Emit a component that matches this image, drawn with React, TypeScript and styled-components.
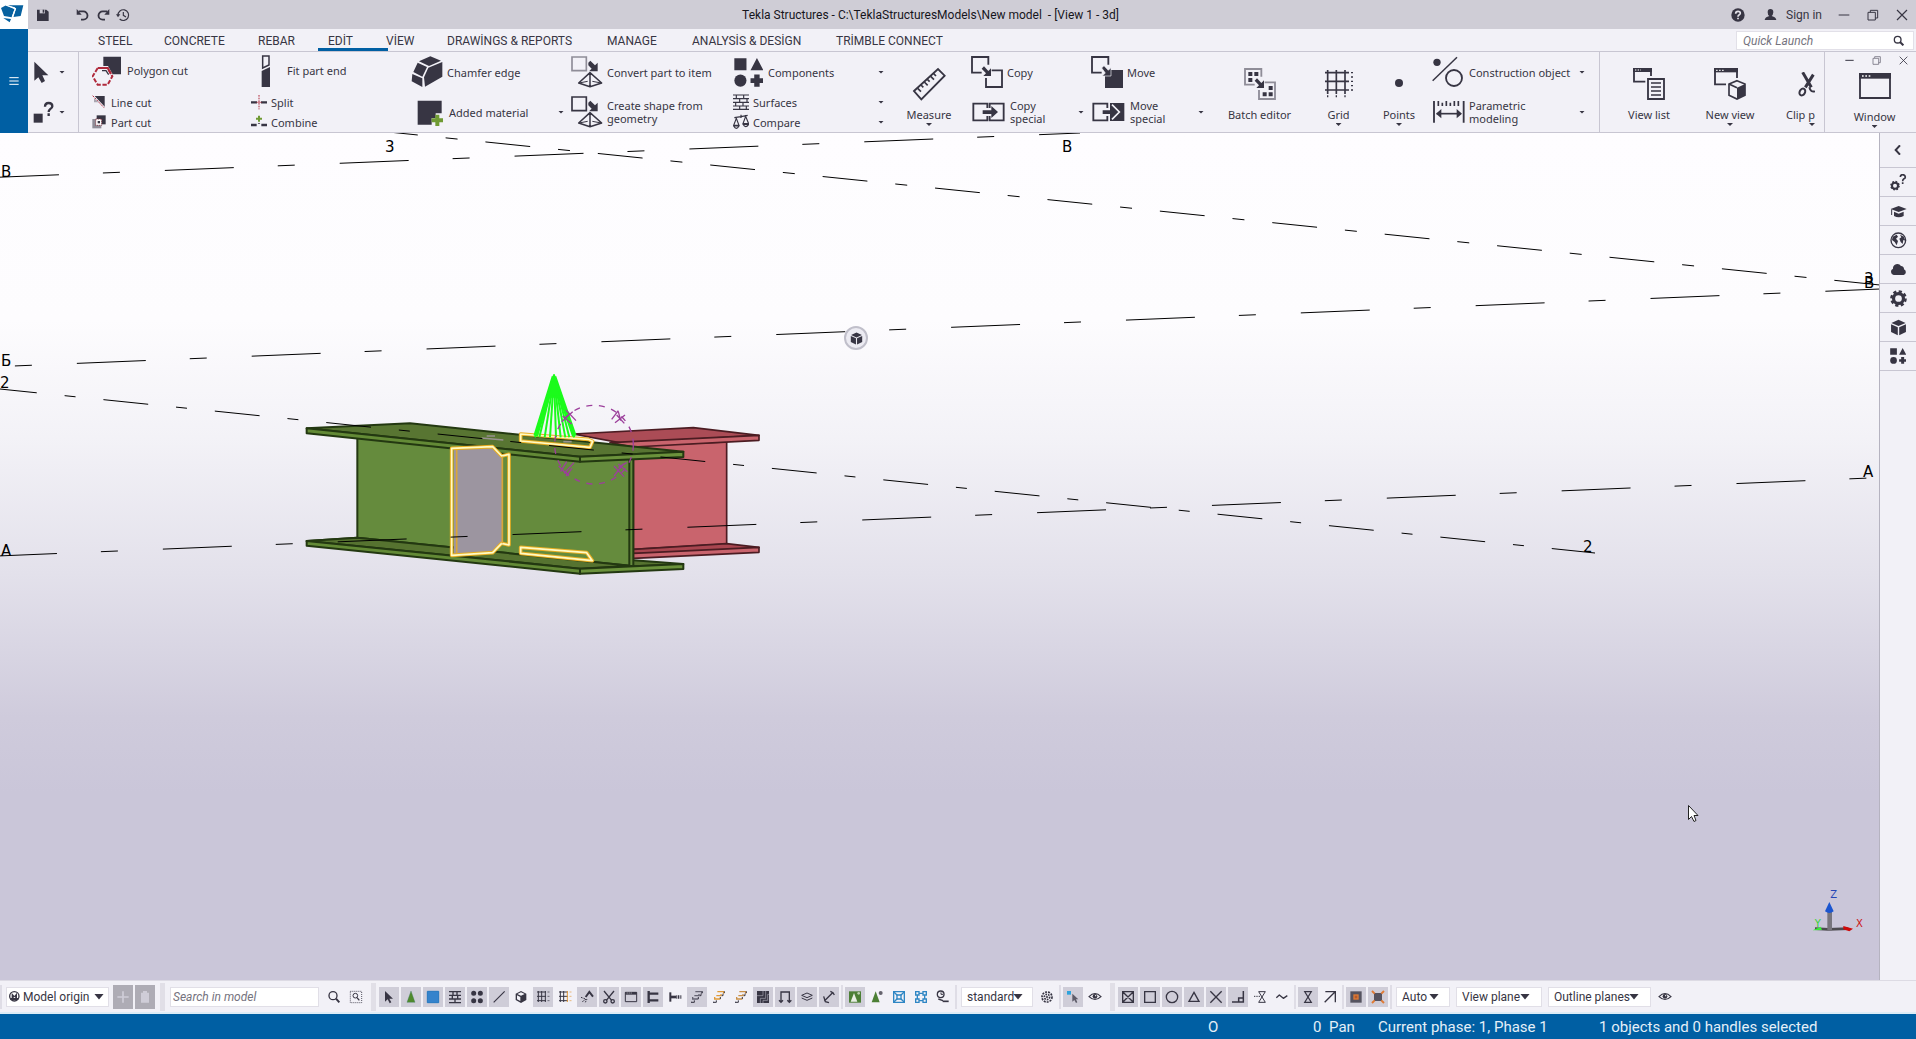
import React, { ReactNode } from "react";
import styled, { createGlobalStyle } from "styled-components";

const ink = "#373543";
const panel = "#f2f1f7";
const line = "#c8c6d2";
const brand = "#005fa3";
const uiFont = `Roboto, "Noto Sans", sans-serif`;
const ribbonFont = `"Noto Sans", "Open Sans", sans-serif`;

const GlobalStyle = createGlobalStyle`
  * { box-sizing: border-box; }
  body { margin: 0; background: ${panel}; color: ${ink}; font: 12px/16px ${uiFont}; }
  button, input, select { font: inherit; color: inherit; }
  button { border: 0; padding: 0; background: none; cursor: default; }
  svg { display: block; flex: none; }
`;

/* ---------- page frame ---------- */

const Page = styled.div`
  display: flex;
  flex-direction: column;
  height: 100vh;
  overflow: hidden;
`;

const Header = styled.header`
  display: grid;
  grid-template-columns: 28px minmax(0, 1fr);
  grid-template-rows: 29px 23px 81px;
`;

const LogoBox = styled.div`
  background: #fff;
`;

const MainMenu = styled.button`
  grid-row: 2 / 4;
  grid-column: 1;
  display: flex;
  align-items: center;
  justify-content: center;
  background: ${brand};
`;

const TitleBar = styled.div`
  display: flex;
  align-items: center;
  padding: 0 8px;
  background: #cfcdd6;
`;

const QuickTools = styled.div`
  display: flex;
  gap: 6px;
`;

const ToolButton = styled.button<{ $after?: number }>`
  display: flex;
  align-items: center;
  justify-content: center;
  width: 14px;
  height: 18px;
  margin-right: ${(p) => p.$after ?? 0}px;
`;

const Title = styled.h1`
  flex: 1;
  margin: 0;
  text-align: center;
  white-space: pre;
  font: 12px/16px ${uiFont};
  color: #16151c;
`;

const Account = styled.div`
  display: flex;
  align-items: center;
  gap: 16px;
`;

const SignIn = styled.button`
  display: flex;
  align-items: center;
  gap: 9px;
`;

const WindowKeys = styled.div<{ $gap: number }>`
  display: flex;
  gap: ${(p) => p.$gap}px;
`;

/* ---------- tabs ---------- */

const TabRow = styled.div`
  display: flex;
  align-items: stretch;
  border-bottom: 1px solid ${line};
  padding-left: 54px;
`;

const Tabs = styled.nav`
  display: flex;
  flex: 1;
`;

const Tab = styled.a<{ $w: number; $active?: boolean }>`
  position: relative;
  width: ${(p) => p.$w}px;
  padding-left: 16px;
  line-height: 25px;
  height: 22px;
  white-space: nowrap;
  color: ${ink};
  text-decoration: none;

  &::after {
    content: "";
    display: ${(p) => (p.$active ? "block" : "none")};
    position: absolute;
    left: 6px;
    bottom: 0;
    width: 70px;
    height: 3px;
    background: ${brand};
  }
`;

const QuickLaunch = styled.label`
  display: flex;
  align-items: center;
  width: 178px;
  margin: 2px 2px 1px 0;
  padding: 0 9px 0 6px;
  background: #fff;
  border: 1px solid #e2e0e8;
`;

const GhostInput = styled.input`
  flex: 1;
  min-width: 0;
  padding: 0;
  border: 0;
  outline: 0;
  background: none;
  font-style: italic;
  &::placeholder { color: #75737e; opacity: 1; }
`;

/* ---------- ribbon ---------- */

const Ribbon = styled.div`
  display: flex;
  border-bottom: 1px solid ${line};
  font: 11px/13px ${ribbonFont};
`;

const PickColumn = styled.div`
  display: grid;
  grid-template-rows: 40px 40px;
  width: 51px;
  padding-left: 5px;
  border-right: 1px solid ${line};
`;

const Column = styled.div<{ $w: number; $pad?: number }>`
  display: flex;
  flex-direction: column;
  width: ${(p) => p.$w}px;
  padding-left: ${(p) => p.$pad ?? 0}px;
`;

const Command = styled.button<{ $h: number; $gap?: number; $inset?: number }>`
  display: flex;
  align-items: center;
  gap: ${(p) => p.$gap ?? 4}px;
  height: ${(p) => p.$h}px;
  padding: 0 7px 0 ${(p) => p.$inset ?? 0}px;
  text-align: left;
`;

const Caret = styled.i<{ $push?: boolean }>`
  width: 6px;
  height: 3px;
  margin-left: ${(p) => (p.$push ? "auto" : "0")};
  background: ${ink};
  clip-path: polygon(0 0, 100% 0, 50% 100%);
`;

const SmallRows = styled.div`
  display: flex;
  flex-direction: column;
  margin-top: 3px;
`;

const BigCommand = styled.button<{ $w: number; $end?: boolean }>`
  display: flex;
  flex: none;
  flex-direction: column;
  align-items: ${(p) => (p.$end ? "flex-end" : "center")};
  width: ${(p) => p.$w}px;
  padding-top: 13px;
  white-space: nowrap;
`;

const BigIcon = styled.span`
  display: flex;
  align-items: center;
  height: 38px;
  margin-bottom: 5px;
`;

const BigLabel = styled.span`
  line-height: 14px;
  margin-bottom: 1px;
`;

const ViewGroup = styled.div`
  display: flex;
  flex: 1;
  min-width: 0;
  margin-left: 7px;
  border-left: 1px solid ${line};
`;

const WindowGroup = styled.div`
  display: flex;
  flex-direction: column;
  align-items: flex-end;
  width: 92px;
  border-left: 1px solid ${line};
  padding: 4px 8px 0 0;
`;

const WindowCommand = styled(BigCommand)`
  align-self: center;
  padding: 2px 0 0 16px;
`;

/* ---------- workspace ---------- */

const Workspace = styled.main`
  display: flex;
  flex: 1;
  min-height: 0;
`;

const Viewport = styled.section`
  position: relative;
  flex: 1;
  min-width: 0;
  overflow: hidden;
  background: linear-gradient(#fefdff 0%, #fdfcfe 22%, #f3f2f7 36%, #e3e1eb 52%, #cfcbdc 69%, #cac6d9 78%);
  border-right: 1px solid #b5b3c0;
`;

const Scene = styled.svg`
  width: 100%;
  height: 100%;
`;

const CubeButton = styled.button`
  position: absolute;
  left: 844px;
  top: 193px;
  display: flex;
  align-items: center;
  justify-content: center;
  width: 24px;
  height: 24px;
  border: 2px solid #c0bfca;
  border-radius: 50%;
  background: #ecebf2;
`;

const SideBar = styled.aside`
  display: flex;
  flex-direction: column;
  width: 36px;
`;

const SideButton = styled.button<{ $h?: number }>`
  display: flex;
  align-items: center;
  justify-content: center;
  height: ${(p) => p.$h ?? 29}px;
  border-bottom: 1px solid ${line};
`;

/* ---------- bottom bars ---------- */

const SelectBar = styled.div`
  display: flex;
  align-items: center;
  gap: 2px;
  height: 34px;
  border-top: 1px solid #dddbe4;
  border-bottom: 2px solid #dcecf6;
`;

const Handle = styled.span`
  width: 5px;
  align-self: stretch;
  margin: 2px 1px 1px 3px;
  background: #e1dfe7;
`;

const Divider = styled.span`
  width: 2px;
  height: 24px;
  background: #dfdde6;
`;

const Toggle = styled.button<{ $on?: boolean }>`
  width: 20px;
  height: 20px;
  background: ${(p) => (p.$on ? "#cfcdd8" : "transparent")};
`;

const OriginKey = styled.button`
  display: flex;
  align-items: center;
  justify-content: center;
  width: 20px;
  height: 24px;
  background: #aeacb5;
`;

const Drop = styled.label<{ $w: number }>`
  display: grid;
  grid-template-columns: minmax(0, 1fr);
  align-items: center;
  width: ${(p) => p.$w}px;
  height: 20px;
  margin: 0 2px;
  background: #fff;
  border: 1px solid #e1dfe7;

  & > * { grid-area: 1 / 1; }
`;

const DropSelect = styled.select<{ $pad: number }>`
  appearance: none;
  width: 100%;
  height: 18px;
  padding: 0 0 0 ${(p) => p.$pad}px;
  border: 0;
  outline: 0;
  background: none;
`;

const DropCaret = styled.i<{ $right: number }>`
  justify-self: end;
  width: 10px;
  height: 6px;
  margin-right: ${(p) => p.$right}px;
  background: ${ink};
  clip-path: polygon(0 0, 100% 0, 50% 100%);
  pointer-events: none;
`;

const SearchBox = styled(GhostInput)`
  flex: none;
  width: 149px;
  height: 20px;
  margin: 0 3px 0 2px;
  padding-left: 2px;
  border: 1px solid #e1dfe7;
  background: #fff;
`;

const StatusBar = styled.footer`
  display: grid;
  grid-template-columns: minmax(0, 1fr) 105px 16px 49px 221px 317px;
  height: 25px;
  background: ${brand};
  color: #e4eff8;
  font-size: 15px;
  line-height: 26px;
  white-space: nowrap;
`;

const Status = styled.span<{ $col: number }>`
  grid-column: ${(p) => p.$col};
`;

/* ---------- icons: drawn on a grid of three units per pixel ---------- */

const Icon = ({ w, h = w, children }: { w: number; h?: number; children: ReactNode }) => (
  <svg width={w} height={h} viewBox={`0 0 ${w * 3} ${h * 3}`} fill="none" stroke="none" aria-hidden="true">
    {children}
  </svg>
);

const Logo = () => (
  <Icon w={28} h={29}>
    <path d="M3 24 L18 16 L44 27 L35 52 L12 48Z M22 16 L70 16 L62 48 L40 51 L48 26 L44 22Z M10 54 L33 57 L29 67Z" fill="#07619f" />
    <path d="M17 15 L46 26 L37 52" stroke="#fff" strokeWidth="4" />
  </Icon>
);

const Pyramid = () => (
  <>
    <path d="M57 50 L23 81 L57 92 L92 81Z M57 50 L57 92" stroke={ink} strokeWidth="4.5" strokeLinejoin="round" />
    <path d="M24 81 L50 76 M64 76 L91 81" stroke={ink} strokeWidth="3" />
    <path d="M52 20 L58 14 L72 28 L80 20 L80 46 L54 46 L62 38 L52 28Z" fill={ink} />
  </>
);

const Glasses = () => (
  <g stroke={ink} strokeWidth="4">
    <circle cx="14" cy="14" r="10" />
    <path d="M21 21 L31 31" strokeWidth="6" />
  </g>
);

const Cube = ({ size }: { size: number }) => (
  <svg width={size} height={size} viewBox="0 0 48 48" aria-hidden="true">
    <path d="M24 2 L44 11 L24 20 L4 11Z M3 15 L22 23 L22 46 L3 37Z M45 15 L26 23 L26 46 L45 37Z" fill={ink} />
  </svg>
);

const Shapes = ({ size }: { size: number }) => (
  <svg width={size} height={size} viewBox="0 0 86 86" aria-hidden="true">
    <path d="M1 1H37V36H1Z M68 0 L87 36H49Z M60 49H76V60H87V74H76V85H60V74H49V60H60Z" fill={ink} />
    <circle cx="19" cy="67" r="18" fill={ink} />
  </svg>
);

const Gear = ({ size }: { size: number }) => (
  <svg width={size} height={size} viewBox="0 0 48 48" aria-hidden="true">
    <circle cx="24" cy="24" r="14" fill="none" stroke={ink} strokeWidth="9" />
    <circle cx="24" cy="24" r="20" fill="none" stroke={ink} strokeWidth="7" strokeDasharray="9 6.7" />
  </svg>
);

const MinKey = () => <Icon w={12}><path d="M2 18H34" stroke={ink} strokeWidth="3" /></Icon>;
const RestoreKey = () => (
  <Icon w={12}><path d="M3 10H25V33H3Z M10 10V4H32V27H25" stroke={ink} strokeWidth="3" /></Icon>
);
const CloseKey = () => <Icon w={12}><path d="M3 3L33 33M33 3L3 33" stroke={ink} strokeWidth="3.5" /></Icon>;
const SmallMin = () => <Icon w={9}><path d="M1 13H26" stroke={ink} strokeWidth="3" /></Icon>;
const SmallRestore = () => (
  <Icon w={9}><path d="M3 7H20V25H3Z M8 6V2H25V20H20" stroke="#777582" strokeWidth="2.5" /></Icon>
);
const SmallClose = () => <Icon w={9}><path d="M2 2L25 25M25 2L2 25" stroke={ink} strokeWidth="2.5" /></Icon>;

const GridLines = ({ accent = ink }: { accent?: string }) => (
  <>
    <path d="M12 15H39M12 28H39M12 41H39M16 12V45M26 12V45" stroke={ink} strokeWidth="3" />
    <path d="M37 12V45" stroke={accent} strokeWidth="3" />
    <path d="M44 15H50M44 28H50M44 41H50" stroke={accent} strokeWidth="3" strokeDasharray="3 2" />
  </>
);

const Stairs = ({ color }: { color: string }) => (
  <>
    <path d="M25 14H44V20M22 26H36V21M17 30V36H34" stroke={color} strokeWidth="4" />
    <path d="M46 13V18M38 26H42V20M34 36V30M14 44V48M14 46H22V40" stroke={ink} strokeWidth="3" />
  </>
);

const Eye = () => (
  <>
    <path d="M12 29 Q30 10 48 29 Q30 46 12 29Z" stroke={ink} strokeWidth="3.5" />
    <circle cx="30" cy="28" r="7" fill={ink} />
    <circle cx="32" cy="26" r="2" fill="#fff" />
  </>
);

const Scissors = () => (
  <g stroke={ink} strokeWidth="4">
    <path d="M15 12L38 40M45 12L22 40" />
    <circle cx="19" cy="43" r="5" />
    <circle cx="41" cy="43" r="5" />
  </g>
);

type Key = { name: string; on?: boolean; art: ReactNode };

const selectKeys: Key[] = [
  { name: "Select all", on: true, art: <path d="M18 12V44L26 37L32 49L37 46L31 35H42Z" fill={ink} /> },
  { name: "Select components", on: true, art: <path d="M30 12L42 46H18Z" fill="#4f8a2c" stroke="#3d7a6a" strokeWidth="1" /> },
  { name: "Select parts", on: true, art: <path d="M13 13H47V47H13Z" fill="#3583cc" stroke="#2478c0" strokeWidth="3" /> },
  { name: "Select surfaces", on: true, art: <path d="M12 14H48M12 25H48M12 36H48M12 47H48M24 14V25M38 25V36M22 25V36M30 36V47M36 14V25" stroke={ink} strokeWidth="4" /> },
  { name: "Select points", on: true, art: <path d="M20 19h.1M40 19h.1M20 41h.1M40 41h.1" stroke={ink} strokeWidth="15" strokeLinecap="round" /> },
  { name: "Select lines", on: true, art: <path d="M14 46L47 13" stroke={ink} strokeWidth="3.5" /> },
  { name: "Select reference models", art: <g><path d="M30 12L46 20V39L30 48L14 39V20Z" fill={ink} /><path d="M30 16L41 21L30 26L19 21Z M18 25L28 30V42L18 37Z" fill="#f2f1f7" /></g> },
  { name: "Select grids", on: true, art: <GridLines /> },
  { name: "Select grid lines", art: <GridLines accent="#e39a3c" /> },
  { name: "Select welds", on: true, art: <g stroke={ink}><path d="M26 30L37 15L48 29" strokeWidth="6" /><path d="M12 31L28 37M16 44L28 36M25 46L30 36" strokeWidth="3" strokeDasharray="5 3" /></g> },
  { name: "Select cuts", on: true, art: <Scissors /> },
  { name: "Select views", on: true, art: <g><path d="M13 16H47V44H13Z" stroke={ink} strokeWidth="3" /><path d="M13 15H47V23H13Z" fill={ink} /><path d="M17 18H34" stroke="#fff" strokeWidth="2" strokeDasharray="3 3" /></g> },
  { name: "Select fittings", on: true, art: <path d="M17 12V48M17 20H46M17 40H46" stroke={ink} strokeWidth="7" /> },
  { name: "Select bolts", art: <g stroke={ink}><path d="M16 16V44" strokeWidth="6" /><path d="M18 30H34" strokeWidth="8" /><path d="M34 30H50" strokeWidth="10" strokeDasharray="3 2" /></g> },
  { name: "Select rebars", on: true, art: <Stairs color="#656371" /> },
  { name: "Select rebar groups", art: <Stairs color="#e09a3a" /> },
  { name: "Select single rebars", art: <Stairs color="#c99048" /> },
  { name: "Select surface treatment", on: true, art: <g><path d="M12 12H48V48H12Z" fill={ink} /><path d="M30 12V26H12M38 12V34H22V48M48 22H44V40H30V48" stroke="#a9a7b3" strokeWidth="2" /></g> },
  { name: "Select loads", on: true, art: <path d="M18 44V15H43V44M12 40L18 46L24 40M37 40L43 46L49 40" stroke={ink} strokeWidth="4" /> },
  { name: "Select planes", on: true, art: <path d="M30 18L46 25L30 32L14 25Z M14 33L30 40L46 33" stroke={ink} strokeWidth="3" /> },
  { name: "Select distances", on: true, art: <path d="M16 42L40 18M14 28L19 44L30 47M34 13L42 17L46 24" stroke={ink} strokeWidth="4" /> },
];

const assemblyKeys: Key[] = [
  { name: "Select assemblies", on: true, art: <g><path d="M12 13H48V47H12Z" fill="#4c7f35" /><path d="M27 18L37 44H17Z" fill="#e9eee4" /><circle cx="41" cy="19" r="4" fill="#bcd0b0" /></g> },
  { name: "Select objects in assemblies", art: <g><path d="M26 13L38 46H14Z" fill="#4c7f35" /><circle cx="41" cy="18" r="6" fill="#65636d" /></g> },
  { name: "Select components group", art: <g stroke="#2f86c4" strokeWidth="4"><path d="M14 14H46V46H14Z" /><path d="M14 14L46 46M46 14L14 46" /><path d="M24 24H36V36H24Z" fill="#f2f1f7" /></g> },
  { name: "Select objects in components", art: <path d="M14 14H24V24H14ZM36 14H46V24H36ZM14 36H24V46H14ZM36 36H46V46H36ZM19 24V36M41 24V36M24 19H36M24 41H36" stroke="#2f86c4" strokeWidth="4" /> },
  { name: "Select tasks", art: <g stroke={ink}><circle cx="23" cy="22" r="10" strokeWidth="4" /><path d="M24 16V22H30" strokeWidth="3" /><path d="M16 36L30 41" strokeWidth="4" /><path d="M29 43H47" strokeWidth="5" /></g> },
];

const snapKeys: Key[] = [
  { name: "Snap to reference points", on: true, art: <path d="M14 14H46V46H14ZM14 14L46 46M46 14L14 46" stroke={ink} strokeWidth="4" /> },
  { name: "Snap to geometry points", on: true, art: <path d="M14 14H46V46H14Z" stroke={ink} strokeWidth="4" /> },
  { name: "Snap to centers", on: true, art: <circle cx="30" cy="30" r="17" stroke={ink} strokeWidth="4" /> },
  { name: "Snap to midpoints", on: true, art: <path d="M30 16L45 43H15Z" stroke={ink} strokeWidth="4" /> },
  { name: "Snap to intersections", on: true, art: <path d="M13 13L47 47M47 13L13 47" stroke={ink} strokeWidth="4" /> },
  { name: "Snap to perpendicular", on: true, art: <path d="M12 45H46V12M32 44V33H44" stroke={ink} strokeWidth="4.5" /> },
  { name: "Snap to extensions", art: <g stroke={ink} strokeWidth="3"><path d="M12 28H32" strokeDasharray="4 3" /><path d="M26 14H46L26 46H46Z" /></g> },
  { name: "Snap to free points", art: <path d="M13 32L22 24L34 34L46 26" stroke={ink} strokeWidth="4" strokeLinejoin="round" /> },
];

const Keys = ({ list }: { list: Key[] }) => (
  <>
    {list.map((k) => (
      <Toggle key={k.name} $on={k.on} aria-label={k.name}>
        <Icon w={20}>{k.art}</Icon>
      </Toggle>
    ))}
  </>
);

const Picker = ({ w, name, value, right, pad = 5 }: { w: number; name: string; value: string; right: number; pad?: number }) => (
  <Drop $w={w}>
    <DropSelect $pad={pad} aria-label={name} defaultValue={value}>
      <option>{value}</option>
    </DropSelect>
    <DropCaret $right={right} />
  </Drop>
);

/* ---------- 3D scene ---------- */

const dash = "69 44 17 45";
const rays = [735, 748, 764, 780, 798, 812, 826, 838, 853];

const Beams = () => (
  <g transform="translate(290 360) scale(.33333)" strokeLinejoin="round">
    <g stroke="#4b1c22" strokeWidth="5">
      <path d="M1030 258L1310 246V552L1030 568Z" fill="#c9646d" />
      <path d="M1030 568L1310 551L1407 562L1120 584L1030 580Z" fill="#a94650" />
      <path d="M1030 580L1407 562V577L1030 595Z" fill="#c9646d" />
      <path d="M850 222L1210 203L1407 226L1000 250Z" fill="#ab4c56" />
      <path d="M960 248L1407 226V241L1030 261Z" fill="#c9646d" />
    </g>
    <g stroke="#233811" strokeWidth="6">
      <path d="M50 543L202 533L1020 600L1180 612L870 626Z" fill="#567330" />
      <path d="M202 232L1020 290V617L202 533Z" fill="#658b3d" />
      <path d="M202 533L1020 617L870 626L50 543Z" fill="#567330" />
      <path d="M50 543L870 626V641L50 557Z" fill="#638a36" />
      <path d="M870 626L1180 612V627L870 641Z" fill="#6b923c" />
      <path d="M1018 290H1030V618H1018Z" fill="#658b3d" />
      <path d="M50 205L360 190L1180 275L870 290Z" fill="#587532" />
      <path d="M50 205L870 290V305L50 220Z" fill="#638a36" />
      <path d="M870 290L1180 275V291L870 305Z" fill="#6b923c" />
    </g>
    <path d="M492 268L610 262L636 290V550L608 578L492 584Z" fill="#9c95a0" />
    {[["#e9ae22", 11], ["#fffbc4", 5]].map(([color, width]) => (
      <g key={color} stroke={color as string} strokeWidth={width as number} fill="none">
        <path d="M485 265L608 260L635 288L657 283V555L635 550L608 578L485 586Z" />
        <path d="M692 222L895 238L908 244L900 262L692 243Z M692 562L890 578L907 602L692 580Z" />
      </g>
    ))}
    <path d="M500 270V580M637 290V550" stroke="#d9a63a" strokeWidth="5" fill="none" />
    <path d="M575 234L640 240M590 228H615M820 245H845" stroke="#97918f" strokeWidth="5" />
    <g stroke="#1bfb1b" strokeWidth="6">
      {rays.map((x) => <path key={x} d={`M792 50L${x} 232`} />)}
      <path d="M792 50L737 228M792 50L853 228" strokeWidth="14" />
      <path d="M792 45L812 110H772Z" fill="#1bfb1b" />
    </g>
    <g stroke="#9c3f9b" strokeWidth="4" fill="none">
      <circle cx="912" cy="254" r="118" strokeDasharray="18 20" />
      <path d="M965 178L985 152M975 188L1005 165M980 165L1003 190M985 155L992 182" />
      <path d="M828 150L858 182M818 168L845 192M815 185L848 155" />
      <path d="M806 318L836 348M822 340L852 308M812 335L830 305M828 348L846 325" />
      <path d="M972 318L1002 350M985 312L1012 335M972 348L1000 312M985 322L1010 308" />
    </g>
  </g>
);

const Axes = () => (
  <g transform="translate(1500 870) scale(.33333)">
    <path d="M945 176L985 178L1045 176" stroke="#4d4b50" strokeWidth="8" fill="none" />
    <path d="M989 125V182" stroke="#77757d" strokeWidth="14" />
    <path d="M988 96L1001 124Q988 134 975 124Z" fill="#1b55cf" />
    <path d="M1030 168L1059 176L1048 184L1030 178Z" fill="#cf0909" />
    <path d="M938 181L962 170L966 180Z" fill="#3be83b" />
    <g fontFamily="'DejaVu Sans'" fontSize="30">
      <text x="991" y="84" fill="#2546b5">Z</text>
      <text x="944" y="172" fill="#3bd23b">Y</text>
      <text x="1068" y="171" fill="#cc1212">X</text>
    </g>
  </g>
);

const ModelScene = () => (
  <Scene viewBox="0 133 1879 847" preserveAspectRatio="xMinYMin slice" role="img" aria-label="3D model view">
    <Beams />
    <g stroke="#000" strokeWidth="1" fill="none">
      <path d="M-10 177.6L1080 133" strokeDasharray={dash} />
      <path d="M-98 370.6L1880 289" strokeDasharray={dash} />
      <path d="M-12 556.4L1870 478" strokeDasharray={dash} />
      <path d="M373 130.4L1880 285" strokeDasharray="45 28 12 28" />
      <path d="M-8 388.2L1595 553" strokeDasharray="45 28 11 28" />
    </g>
    <g fontFamily="'DejaVu Sans', sans-serif" fontSize="15" fill="#000">
      <text x="1" y="177">B</text>
      <text x="385" y="152">3</text>
      <text x="1062" y="152">B</text>
      <text x="1" y="366">Б</text>
      <text x="0" y="388">2</text>
      <text x="1" y="556">A</text>
      <text x="1864" y="284">3</text>
      <text x="1864" y="288">B</text>
      <text x="1863" y="477">A</text>
      <text x="1583" y="552">2</text>
    </g>
    <Axes />
    <path d="M1688.5 805.5V819.5L1691.5 816.5L1694 821.5L1696 820.5L1694 815.5H1698Z" fill="#fff" stroke="#222" />
  </Scene>
);

/* ---------- data ---------- */

const tabs: [string, number][] = [
  ["STEEL", 66], ["CONCRETE", 94], ["REBAR", 70], ["EDİT", 58], ["VİEW", 61],
  ["DRAWİNGS & REPORTS", 160], ["MANAGE", 85], ["ANALYSİS & DESİGN", 144], ["TRİMBLE CONNECT", 140],
];

export default function App() {
  return (
    <Page>
      <GlobalStyle />
      <Header>
        <LogoBox><Logo /></LogoBox>
        <TitleBar>
          <QuickTools>
            <ToolButton aria-label="Save" $after={20}>
              <Icon w={14}><path d="M3 5H31L38 11V39H3Z" fill={ink} /><path d="M11 4H27V16H11Z" fill="#cfcdd6" /><path d="M20 5H25V14H20Z" fill={ink} /></Icon>
            </ToolButton>
            <ToolButton aria-label="Undo">
              <Icon w={14}><path d="M8 10H22A12 12 0 0 1 22 35H15" stroke={ink} strokeWidth="5.5" /><path d="M2 3V20H17L12 14Z" fill={ink} /></Icon>
            </ToolButton>
            <ToolButton aria-label="Redo">
              <Icon w={14}><path d="M34 10H20A12 12 0 0 0 20 35H27" stroke={ink} strokeWidth="5.5" /><path d="M40 3V20H25L30 14Z" fill={ink} /></Icon>
            </ToolButton>
            <ToolButton aria-label="History">
              <Icon w={14}><path d="M6 22A16 16 0 1 1 11 33" stroke={ink} strokeWidth="3.5" /><path d="M22 12V22L30 27" stroke={ink} strokeWidth="3.5" /><path d="M0 19H13L6 28Z" fill={ink} /></Icon>
            </ToolButton>
          </QuickTools>
          <Title>{"Tekla Structures - C:\\TeklaStructuresModels\\New model  - [View 1 - 3d]"}</Title>
          <Account>
            <ToolButton aria-label="Help" $after={3}>
              <Icon w={14}><circle cx="21" cy="21" r="20" fill={ink} /><path d="M14 17Q14 10 21 10T28 16Q28 19 24 21Q21 23 21 26M21 29V34" stroke="#e4e2ea" strokeWidth="5" /></Icon>
            </ToolButton>
            <SignIn>
              <Icon w={13}><path d="M19 3Q28 3 28 13Q27 22 23 24Q36 27 37 36H2Q3 27 16 24Q11 22 11 13Q11 3 19 3Z" fill={ink} /></Icon>
              Sign in
            </SignIn>
            <WindowKeys $gap={17}>
              <button aria-label="Minimize"><MinKey /></button>
              <button aria-label="Restore"><RestoreKey /></button>
              <button aria-label="Close"><CloseKey /></button>
            </WindowKeys>
          </Account>
        </TitleBar>
        <MainMenu aria-label="File menu">
          <Icon w={10}><path d="M1 5H29M1 15H29M1 25H29" stroke="#fff" strokeWidth="3" /></Icon>
        </MainMenu>
        <TabRow>
          <Tabs>
            {tabs.map(([name, w]) => <Tab key={name} href="#" $w={w} $active={name === "EDİT"}>{name}</Tab>)}
          </Tabs>
          <QuickLaunch>
            <GhostInput placeholder="Quick Launch" aria-label="Quick Launch" />
            <Icon w={11}><Glasses /></Icon>
          </QuickLaunch>
        </TabRow>
        <Ribbon>
          <PickColumn>
            <Command $h={40} $gap={9} aria-label="Select">
              <Icon w={17} h={22}><path d="M4 2V59L16 49L26 66L36 60L28 43H46Z" fill={ink} /></Icon>
              <Caret />
            </Command>
            <Command $h={40} $gap={5} aria-label="Inquire">
              <Icon w={21} h={22}><path d="M2 38H29V65H2Z" fill={ink} /><path d="M36 17Q36 6 47 6T58 16Q58 21 51 25Q47 28 47 33M47 37V45" stroke={ink} strokeWidth="7" /></Icon>
              <Caret />
            </Command>
          </PickColumn>

          <Column $w={172} $pad={13}>
            <Command $h={40} $gap={5}>
              <Icon w={30}>
                <path d="M34 2H87V55H62L48 30H34Z" fill={ink} />
                <path d="M17 36H47L61 61L47 86H17L2 61Z" stroke="#b02a3c" strokeWidth="6" strokeDasharray="13 5" fill="none" />
                <path d="M30 36H47L57 54" stroke="#b02a3c" strokeWidth="6" />
                <path d="M30 44H42L50 56" stroke={ink} strokeWidth="4" />
              </Icon>
              Polygon cut
            </Command>
            <SmallRows>
              <Command $h={20} $gap={5}>
                <Icon w={14}><path d="M6 3H38V40Z" fill={ink} /><path d="M2 2L38 40" stroke="#f2f1f7" strokeWidth="7" /><path d="M2 2L36 38" stroke="#b02a3c" strokeWidth="3" strokeDasharray="6 3" /><path d="M6 10V22L20 22Z" fill="#a9a7b1" /></Icon>
                Line cut
              </Command>
              <Command $h={20} $gap={5}>
                <Icon w={14}><path d="M1 12H28V40H1Z" fill="#8f8d98" /><path d="M14 1H41V28H14Z" fill={ink} /><path d="M11 12H29V31H11Z" fill="#fff" stroke="#7b3140" strokeWidth="2.5" strokeDasharray="4 2" /><path d="M17 18H24V25H17Z" fill={ink} /></Icon>
                Part cut
              </Command>
            </SmallRows>
          </Column>

          <Column $w={160}>
            <Command $h={40} $gap={15} $inset={9}>
              <Icon w={12} h={32}><path d="M8 3H27V30L8 39Z" stroke={ink} strokeWidth="4.5" /><path d="M5 48L30 36V96H5Z" fill={ink} /></Icon>
              Fit part end
            </Command>
            <SmallRows>
              <Command $h={20}>
                <Icon w={16}><path d="M0 25H18M30 25H48" stroke={ink} strokeWidth="7" /><path d="M24 3V46" stroke="#b02a3c" strokeWidth="3" strokeDasharray="5 3" /><path d="M16 25H32" stroke="#b02a3c" strokeWidth="2" /></Icon>
                Split
              </Command>
              <Command $h={20}>
                <Icon w={16}><path d="M0 33H17M31 33H48" stroke={ink} strokeWidth="8" /><path d="M24 5V23M15 14H33" stroke="#6f9a33" strokeWidth="6" /><path d="M20 30L24 26L28 30" fill={ink} /></Icon>
                Combine
              </Command>
            </SmallRows>
          </Column>

          <Column $w={160}>
            <Command $h={40}>
              <Icon w={32}><path d="M24 16L58 1L90 14L54 30Z M52 35L94 18V62L42 92L39 64Z M20 20L48 33L34 62L7 48Z M4 54L34 67V93L2 76Z" fill={ink} /></Icon>
              Chamfer edge
            </Command>
            <Command $h={40} $inset={6}>
              <Icon w={28}><path d="M2 8H74V46H56V60H44V80H2Z" fill={ink} /><path d="M61 50V84M44 67H78" stroke="#6f9a33" strokeWidth="12" /></Icon>
              Added material<Caret $push />
            </Command>
          </Column>

          <Column $w={160}>
            <Command $h={40}>
              <Icon w={32}><path d="M3 3H46V44H3Z" stroke="#8f8d98" strokeWidth="5" /><Pyramid /></Icon>
              Convert part to item
            </Command>
            <Command $h={40}>
              <Icon w={32}><path d="M3 3H46V44H3Z" stroke={ink} strokeWidth="5" /><Pyramid /></Icon>
              <span>Create shape from<br />geometry</span>
            </Command>
          </Column>

          <Column $w={160} $pad={2}>
            <Command $h={40} $gap={5} $inset={1}>
              <Shapes size={29} />Components<Caret $push />
            </Command>
            <Command $h={20}>
              <Icon w={16}><path d="M0 3H48M0 14H48M0 25H48M0 36H48M0 46H48M10 3V14M32 3V14M20 14V25M42 14V25M8 25V36M30 25V36M20 36V46M40 36V46" stroke={ink} strokeWidth="3.5" /></Icon>
              Surfaces<Caret $push />
            </Command>
            <Command $h={20}>
              <Icon w={16}><path d="M4 11Q24 8 44 4M24 2V12M10 13L2 34H18ZM38 7L30 29H47ZM2 36Q10 50 18 36ZM30 31Q38 45 47 31Z" stroke={ink} strokeWidth="3.5" /></Icon>
              Compare<Caret $push />
            </Command>
          </Column>

          <BigCommand $w={76}>
            <BigIcon>
              <Icon w={34}><path d="M6 72L78 6L98 26L28 97Z" stroke={ink} strokeWidth="5.5" /><path d="M17 64L27 74M27 54L34 61M37 45L47 55M46 37L53 44M56 28L66 38M65 20L72 27" stroke={ink} strokeWidth="5" /></Icon>
            </BigIcon>
            <BigLabel>Measure</BigLabel><Caret />
          </BigCommand>

          <Column $w={124} $pad={4}>
            <Command $h={40}>
              <Icon w={32}><path d="M32 50H3V3H52V26M62 43H93V93H45V66" stroke={ink} strokeWidth="5.5" /><path d="M32 38L39 31L52 45L60 37V60H37L45 52Z" fill={ink} /></Icon>
              Copy
            </Command>
            <Command $h={40} $gap={5} $inset={1}>
              <Icon w={33} h={20}><path d="M46 18V5H4V55H46V42M53 18V5H95V55H53V42" stroke={ink} strokeWidth="5.5" /><path d="M32 25H58V12L78 30L58 48V36H32Z" fill={ink} /></Icon>
              <span>Copy<br />special</span><Caret $push />
            </Command>
          </Column>

          <Column $w={120}>
            <Command $h={40}>
              <Icon w={32}><path d="M42 42H96V96H42Z" fill={ink} /><path d="M32 50H3V3H52V26" stroke={ink} strokeWidth="5.5" /><path d="M32 36L39 29L52 43L60 35V60H34L43 51Z" fill={ink} stroke="#f2f1f7" strokeWidth="2" /></Icon>
              Move
            </Command>
            <Command $h={40} $gap={5} $inset={1}>
              <Icon w={33} h={20}><path d="M46 18V5H4V55H46V42" stroke={ink} strokeWidth="5.5" /><path d="M54 3H97V57H54Z" fill={ink} /><path d="M60 8L82 30L60 52" stroke="#f2f1f7" strokeWidth="5" /><path d="M32 25H56V12L76 30L56 48V36H32Z" fill={ink} /></Icon>
              <span>Move<br />special</span><Caret $push />
            </Command>
          </Column>

          <BigCommand $w={97}>
            <BigIcon>
              <Icon w={32}><path d="M32 50H3V3H52V26M62 43H93V93H45V66" stroke="#8f8d98" strokeWidth="5.5" /><path d="M13 12H25V24H13ZM31 12H43V24H31ZM13 30H25V42H13ZM74 54H86V66H74ZM56 73H68V85H56ZM74 73H86V85H74Z" fill={ink} /><path d="M32 38L39 31L52 45L60 37V60H37L45 52Z" fill={ink} /></Icon>
            </BigIcon>
            <BigLabel>Batch editor</BigLabel>
          </BigCommand>
          <BigCommand $w={61}>
            <BigIcon>
              <Icon w={28}><path d="M0 8H72M0 34H72M0 60H72M8 0V72M34 0V72M60 0V72" stroke={ink} strokeWidth="5" /><path d="M78 8H84M78 34H84M78 60H84M8 76V82M34 76V82M60 76V82M78 21H84M78 47H84" stroke={ink} strokeWidth="4" /></Icon>
            </BigIcon>
            <BigLabel>Grid</BigLabel><Caret />
          </BigCommand>
          <BigCommand $w={60}>
            <BigIcon><Icon w={10}><circle cx="15" cy="12" r="12" fill={ink} /></Icon></BigIcon>
            <BigLabel>Points</BigLabel><Caret />
          </BigCommand>

          <Column $w={163} $pad={3}>
            <Command $h={40}>
              <Icon w={33}><path d="M2 74L75 4" stroke={ink} strokeWidth="4.5" /><circle cx="15" cy="19" r="11" fill={ink} /><circle cx="66" cy="66" r="24" stroke={ink} strokeWidth="5.5" /></Icon>
              Construction object<Caret $push />
            </Command>
            <Command $h={40}>
              <Icon w={33} h={24}><path d="M6 3V68M95 3V68" stroke={ink} strokeWidth="5.5" /><path d="M14 41H86" stroke={ink} strokeWidth="5" /><path d="M12 41L28 27V55ZM90 41L74 27V55Z" fill={ink} /><path d="M19 3V18M31 8V18M43 3V18M55 8V18M67 3V18M79 3V18" stroke={ink} strokeWidth="5" /></Icon>
              <span>Parametric<br />modeling</span><Caret $push />
            </Command>
          </Column>

          <ViewGroup>
            <BigCommand $w={98}>
              <BigIcon>
                <Icon w={32}><path d="M0 0H57V12H0Z" fill={ink} /><path d="M3 6V41H37M54 6V24" stroke={ink} strokeWidth="5.5" /><path d="M6 6H24" stroke="#fff" strokeWidth="3" strokeDasharray="4 4" /><path d="M45 33H93V93H45Z" stroke={ink} strokeWidth="5.5" /><path d="M54 45H84M54 57H84M54 69H84M54 81H84" stroke={ink} strokeWidth="5" /></Icon>
              </BigIcon>
              <BigLabel>View list</BigLabel>
            </BigCommand>
            <BigCommand $w={64}>
              <BigIcon>
                <Icon w={32}><path d="M0 0H72V13H0Z" fill={ink} /><path d="M3 6V49H36M69 6V30" stroke={ink} strokeWidth="5.5" /><path d="M6 7H33" stroke="#fff" strokeWidth="3" strokeDasharray="5 4" /><path d="M69 38L93 48V82L69 93L45 82V48Z" stroke={ink} strokeWidth="5" /><path d="M69 59L93 48V82L69 93Z" fill={ink} /><path d="M45 48L69 59" stroke={ink} strokeWidth="5" /></Icon>
              </BigIcon>
              <BigLabel>New view</BigLabel><Caret />
            </BigCommand>
            <BigCommand $w={53} $end>
              <BigIcon>
                <Icon w={17} h={25}><path d="M14 1L40 46M46 8L22 46" stroke={ink} strokeWidth="9" /><ellipse cx="13" cy="60" rx="8" ry="11" transform="rotate(28 13 60)" stroke={ink} strokeWidth="6" /><path d="M34 46Q38 62 51 58" stroke={ink} strokeWidth="6" /></Icon>
              </BigIcon>
              <BigLabel>Clip p</BigLabel><Caret />
            </BigCommand>
          </ViewGroup>

          <WindowGroup>
            <WindowKeys $gap={18}>
              <button aria-label="Minimize view"><SmallMin /></button>
              <button aria-label="Restore view"><SmallRestore /></button>
              <button aria-label="Close view"><SmallClose /></button>
            </WindowKeys>
            <WindowCommand $w={80}>
              <BigIcon>
                <Icon w={32} h={26}><path d="M3 3H93V75H3Z" stroke={ink} strokeWidth="5.5" /><path d="M0 0H96V17H0Z" fill={ink} /><path d="M9 9H39" stroke="#fff" strokeWidth="4" strokeDasharray="5 5" /></Icon>
              </BigIcon>
              <BigLabel>Window</BigLabel><Caret />
            </WindowCommand>
          </WindowGroup>
        </Ribbon>
      </Header>

      <Workspace>
        <Viewport>
          <ModelScene />
          <CubeButton aria-label="View cube"><Cube size={13} /></CubeButton>
        </Viewport>
        <SideBar>
          <SideButton $h={35} aria-label="Collapse"><Icon w={10}><path d="M21 1L8 15L21 29" stroke={ink} strokeWidth="6" /></Icon></SideButton>
          <SideButton aria-label="Properties help">
            <Icon w={17}><circle cx="15" cy="35" r="9" stroke={ink} strokeWidth="6" /><circle cx="15" cy="35" r="12" stroke={ink} strokeWidth="5" strokeDasharray="5 4.4" /><path d="M31 9Q31 2 38 2T46 9Q46 13 41 15Q38 17 38 22M38 25V30" stroke={ink} strokeWidth="5" /></Icon>
          </SideButton>
          <SideButton aria-label="Learning"><Icon w={17} h={13}><path d="M26 3L50 12L26 21L2 12Z M12 20L26 26L41 20V33Q26 41 12 33Z" fill={ink} /><path d="M5 13V30" stroke={ink} strokeWidth="3" /></Icon></SideButton>
          <SideButton aria-label="Online">
            <Icon w={17}><circle cx="25" cy="25" r="22" stroke={ink} strokeWidth="4" /><path d="M8 14L20 8L24 14L18 20L24 27L20 40L14 30L6 24ZM30 8L42 14L46 26L40 24L38 36L32 30L28 20L34 16Z" fill={ink} /></Icon>
          </SideButton>
          <SideButton aria-label="Cloud"><Icon w={17} h={13}><path d="M11 36A10 10 0 0 1 9 17A13 13 0 0 1 33 9A9 9 0 0 1 42 19A9 9 0 0 1 41 36Z" fill={ink} /></Icon></SideButton>
          <SideButton aria-label="Settings"><Gear size={17} /></SideButton>
          <SideButton aria-label="Model objects"><Cube size={17} /></SideButton>
          <SideButton aria-label="Applications and components"><Shapes size={16} /></SideButton>
        </SideBar>
      </Workspace>

      <SelectBar>
        <Divider />
        <Drop $w={103}>
          <DropSelect $pad={16} aria-label="Origin" defaultValue="Model origin"><option>Model origin</option></DropSelect>
          <Icon w={13}><circle cx="22" cy="19" r="14" stroke={ink} strokeWidth="4" /><path d="M14 8L22 18L30 8V28L22 20L14 30Z M10 24H34V30H10Z" fill={ink} /></Icon>
          <DropCaret $right={4} />
        </Drop>
        <OriginKey aria-label="Add base point"><Icon w={14}><path d="M21 4V38M4 21H38" stroke="#cfcdd8" strokeWidth="5" /></Icon></OriginKey>
        <OriginKey aria-label="Delete base point"><Icon w={10} h={14}><path d="M3 8H27V38H3Z M9 3H21V8H9Z" fill="#cfcdd8" /></Icon></OriginKey>
        <Handle />
        <SearchBox placeholder="Search in model" aria-label="Search in model" />
        <Toggle aria-label="Search"><Icon w={20}><circle cx="27" cy="26" r="12" stroke={ink} strokeWidth="4" /><path d="M36 35L46 46" stroke={ink} strokeWidth="6" /></Icon></Toggle>
        <Toggle aria-label="Search in selection"><Icon w={20}><path d="M13 13H47V47H13Z" stroke={ink} strokeWidth="2.5" strokeDasharray="3 3" /><circle cx="28" cy="26" r="7" stroke={ink} strokeWidth="3" /><path d="M33 32L40 40" stroke={ink} strokeWidth="4" /></Icon></Toggle>
        <Handle />
        <Keys list={selectKeys} />
        <Divider />
        <Keys list={assemblyKeys} />
        <Divider />
        <Picker w={72} name="Selection filter" value="standard" right={9} />
        <Toggle aria-label="Selection filter settings">
          <Icon w={20}><circle cx="30" cy="30" r="15" stroke={ink} strokeWidth="5" strokeDasharray="6 3" /><circle cx="30" cy="30" r="8" stroke={ink} strokeWidth="5" strokeDasharray="5 3" /><circle cx="30" cy="30" r="3" fill={ink} /></Icon>
        </Toggle>
        <Divider />
        <Toggle $on aria-label="Direct modification">
          <Icon w={20}><path d="M12 12H24V23H12Z" fill="#2ea3dc" /><path d="M28 20V44L34 39L39 48L43 46L39 37H46Z" fill="#5d5b68" /></Icon>
        </Toggle>
        <Toggle aria-label="Selection visibility"><Icon w={20}><Eye /></Icon></Toggle>
        <Handle />
        <Keys list={snapKeys} />
        <Divider />
        <Toggle $on aria-label="Snap to nearest points"><Icon w={20}><path d="M20 14H40L20 46H40Z" stroke={ink} strokeWidth="3.5" /></Icon></Toggle>
        <Toggle aria-label="Snap to lines"><Icon w={20}><path d="M14 46L44 16M16 14H46V46" stroke={ink} strokeWidth="4" /></Icon></Toggle>
        <Divider />
        <Toggle $on aria-label="Snap to dimension points"><Icon w={20}><path d="M13 13H47V47H13Z" fill="#55535f" /><path d="M22 22H38V38H22Z" fill="#e07b35" /><path d="M26 26H34V34H26Z" fill="#b55a2c" /></Icon></Toggle>
        <Toggle $on aria-label="Snap to objects"><Icon w={20}><path d="M18 18H42V42H18Z" fill="#55535f" /><path d="M12 12L20 20M48 12L40 20M12 48L20 40M48 48L40 40" stroke="#e07b35" strokeWidth="6" /></Icon></Toggle>
        <Divider />
        <Picker w={54} name="Snap depth" value="Auto" right={10} />
        <Picker w={86} name="Work plane" value="View plane" right={11} />
        <Picker w={103} name="Plane type" value="Outline planes" right={11} />
        <Toggle aria-label="Snap visibility"><Icon w={20}><Eye /></Icon></Toggle>
      </SelectBar>

      <StatusBar>
        <Status $col={2}>O</Status>
        <Status $col={3}>0</Status>
        <Status $col={4}>Pan</Status>
        <Status $col={5}>Current phase: 1, Phase 1</Status>
        <Status $col={6}>1 objects and 0 handles selected</Status>
      </StatusBar>
    </Page>
  );
}
